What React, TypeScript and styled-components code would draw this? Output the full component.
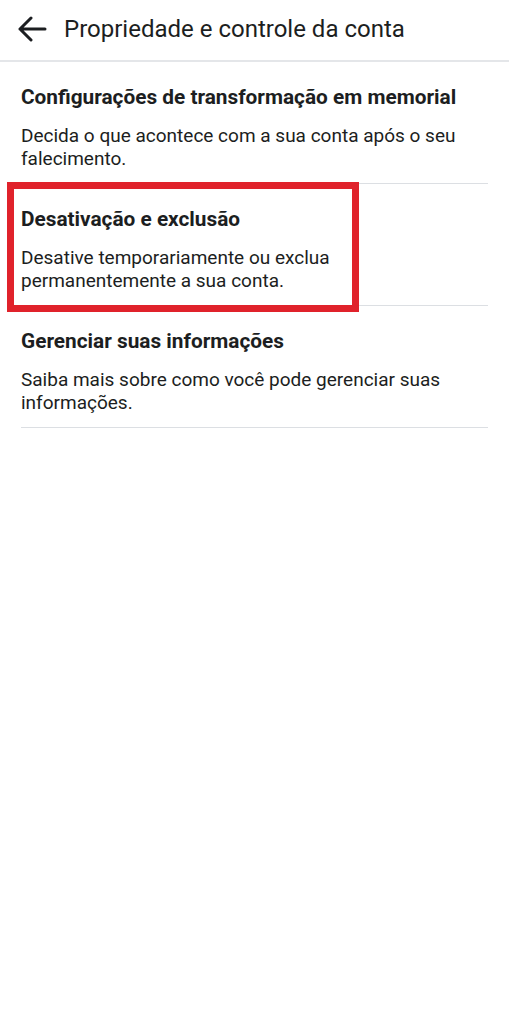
import styled, { createGlobalStyle } from "styled-components";

const GlobalStyle = createGlobalStyle`
  html, body {
    margin: 0;
    padding: 0;
    background: #ffffff;
  }
  body {
    font-family: Roboto, "Liberation Sans", Arial, sans-serif;
    color: #1c1e21;
  }
`;

const items = [
  {
    title: "Configurações de transformação em memorial",
    desc: "Decida o que acontece com a sua conta após o seu falecimento.",
    marked: false,
  },
  {
    title: "Desativação e exclusão",
    desc: "Desative temporariamente ou exclua permanentemente a sua conta.",
    marked: true,
  },
  {
    title: "Gerenciar suas informações",
    desc: "Saiba mais sobre como você pode gerenciar suas informações.",
    marked: false,
  },
];

const BackArrow = () => (
  <svg width="30" height="26" viewBox="0 0 30 26" fill="none">
    <path
      d="M28 13H3M14 2L3 13l11 11"
      stroke="#1c1e21"
      strokeWidth="3"
      strokeLinecap="round"
      strokeLinejoin="round"
    />
  </svg>
);

const App = () => {
  return (
    <>
      <GlobalStyle />
      <Page>
        <Header>
          <BackButton>
            <BackArrow />
          </BackButton>
          <HeaderTitle>Propriedade e controle da conta</HeaderTitle>
        </Header>
        <List>
          {items.map((item) => (
            <Item key={item.title}>
              {item.marked && <Highlight />}
              <ItemTitle>{item.title}</ItemTitle>
              <ItemDesc $narrow={item.marked}>{item.desc}</ItemDesc>
            </Item>
          ))}
        </List>
      </Page>
    </>
  );
};

export default App;

const Page = styled.div`
  width: 509px;
  min-height: 1024px;
  background: #ffffff;
`;

const Header = styled.header`
  display: flex;
  align-items: center;
  border-bottom: 2px solid #e4e6e9;
  padding-left: 17px;
  box-sizing: border-box;
  height: 62px;
`;

const BackButton = styled.div`
  width: 30px;
  height: 26px;
  display: flex;
  align-items: center;
  margin-right: 17px;
  margin-top: -3px;
`;

const HeaderTitle = styled.h1`
  margin: 0;
  margin-top: -3px;
  font-size: 24px;
  font-weight: 400;
  color: #1c1e21;
`;

const List = styled.div`
  padding: 0 21px;
`;

const Item = styled.div`
  position: relative;
  padding: 23px 0 13px;
  border-bottom: 1.5px solid #dcdfe3;
`;

const Highlight = styled.div`
  position: absolute;
  left: -14px;
  top: -2px;
  width: 352px;
  height: 130px;
  border: 7px solid #e0222b;
  box-sizing: border-box;
  pointer-events: none;
`;

const ItemTitle = styled.div`
  font-size: 20.8px;
  font-weight: 700;
  line-height: 24px;
  color: #1c1e21;
  margin-bottom: 16px;
`;

const ItemDesc = styled.div<{ $narrow?: boolean }>`
  font-size: 19px;
  line-height: 22.5px;
  color: #1c1e21;
  max-width: ${({ $narrow }) => ($narrow ? "320px" : "440px")};
`;
